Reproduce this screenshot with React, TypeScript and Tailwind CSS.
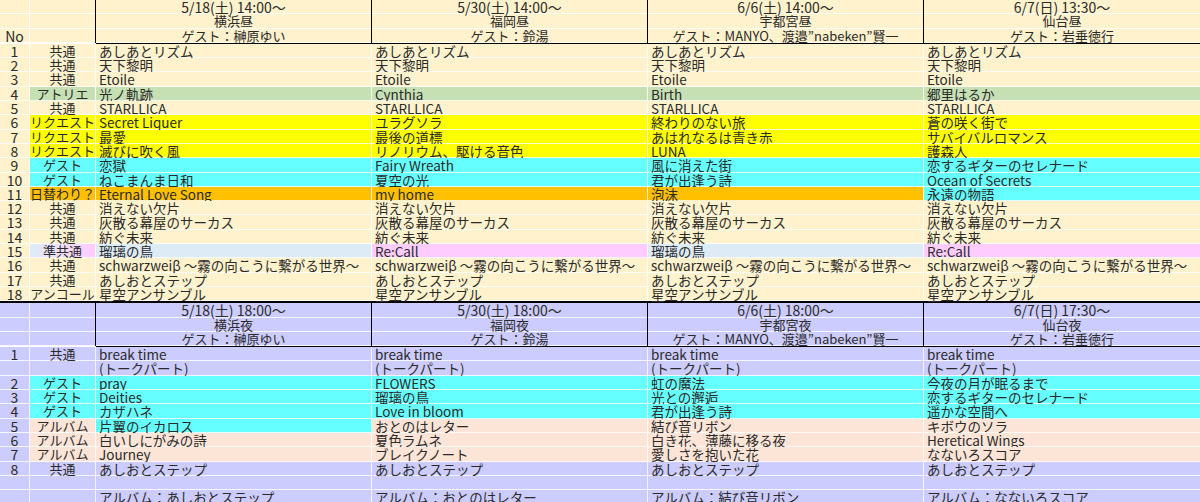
import React from "react";

const CREAM = "bg-[#fff2cc]";
const GREEN = "bg-[#c6e0b4]";
const YELLOW = "bg-[#ffff00]";
const CYAN = "bg-[#66ffff]";
const ORANGE = "bg-[#ffc000]";
const LAV = "bg-[#ccccff]";
const PEACH = "bg-[#fce4d6]";
const BLUE = "bg-[#ddebf7]";
const PINK = "bg-[#ffccff]";

type Row = { no: string; type: string; typeBg: string; noBg: string; songs: [string, string][] };

const r = (no: string, type: string, typeBg: string, noBg: string, songs: [string, string][]): Row => ({ no, type, typeBg, noBg, songs });
const same = (bg: string, a: string, b: string, c: string, d: string): [string, string][] => [
  [a, bg], [b, bg], [c, bg], [d, bg],
];

const dayRows: Row[] = [
  r("1", "共通", CREAM, CREAM, same(CREAM, "あしあとリズム", "あしあとリズム", "あしあとリズム", "あしあとリズム")),
  r("2", "共通", CREAM, CREAM, same(CREAM, "天下黎明", "天下黎明", "天下黎明", "天下黎明")),
  r("3", "共通", CREAM, CREAM, same(CREAM, "Etoile", "Etoile", "Etoile", "Etoile")),
  r("4", "アトリエ", GREEN, CREAM, same(GREEN, "光ノ軌跡", "Cynthia", "Birth", "郷里はるか")),
  r("5", "共通", CREAM, CREAM, same(CREAM, "STARLLICA", "STARLLICA", "STARLLICA", "STARLLICA")),
  r("6", "リクエスト", YELLOW, CREAM, same(YELLOW, "Secret Liquer", "ユラグソラ", "終わりのない旅", "蒼の咲く街で")),
  r("7", "リクエスト", YELLOW, CREAM, same(YELLOW, "最愛", "最後の道標", "あはれなるは青き赤", "サバイバルロマンス")),
  r("8", "リクエスト", YELLOW, CREAM, same(YELLOW, "滅びに吹く風", "リノリウム、駆ける音色", "LUNA", "護森人")),
  r("9", "ゲスト", CYAN, CREAM, same(CYAN, "恋獄", "Fairy Wreath", "風に消えた街", "恋するギターのセレナード")),
  r("10", "ゲスト", CYAN, CREAM, same(CYAN, "ねこまんま日和", "夏空の光", "君が出逢う詩", "Ocean of Secrets")),
  r("11", "日替わり？", ORANGE, CREAM, [["Eternal Love Song", ORANGE], ["my home", ORANGE], ["泡沫", ORANGE], ["永遠の物語", CYAN]]),
  r("12", "共通", CREAM, CREAM, same(CREAM, "消えない欠片", "消えない欠片", "消えない欠片", "消えない欠片")),
  r("13", "共通", CREAM, CREAM, same(CREAM, "灰散る幕屋のサーカス", "灰散る幕屋のサーカス", "灰散る幕屋のサーカス", "灰散る幕屋のサーカス")),
  r("14", "共通", CREAM, CREAM, same(CREAM, "紡ぐ未来", "紡ぐ未来", "紡ぐ未来", "紡ぐ未来")),
  r("15", "準共通", "bg-gradient-to-r from-[#ddebf7] to-[#ffccff]", CREAM, [["瑠璃の鳥", BLUE], ["Re:Call", PINK], ["瑠璃の鳥", BLUE], ["Re:Call", PINK]]),
  r("16", "共通", CREAM, CREAM, same(CREAM, "schwarzweiβ ～霧の向こうに繋がる世界～", "schwarzweiβ ～霧の向こうに繋がる世界～", "schwarzweiβ ～霧の向こうに繋がる世界～", "schwarzweiβ ～霧の向こうに繋がる世界～")),
  r("17", "共通", CREAM, CREAM, same(CREAM, "あしおとステップ", "あしおとステップ", "あしおとステップ", "あしおとステップ")),
  r("18", "アンコール", CREAM, CREAM, same(CREAM, "星空アンサンブル", "星空アンサンブル", "星空アンサンブル", "星空アンサンブル")),
];

const nightRows: Row[] = [
  r("1", "共通", LAV, LAV, same(LAV, "break time", "break time", "break time", "break time")),
  r("", "", LAV, LAV, same(LAV, "(トークパート)", "(トークパート)", "(トークパート)", "(トークパート)")),
  r("2", "ゲスト", CYAN, LAV, same(CYAN, "pray", "FLOWERS", "虹の魔法", "今夜の月が眠るまで")),
  r("3", "ゲスト", CYAN, LAV, same(CYAN, "Deities", "瑠璃の鳥", "光との邂逅", "恋するギターのセレナード")),
  r("4", "ゲスト", CYAN, LAV, same(CYAN, "カザハネ", "Love in bloom", "君が出逢う詩", "遥かな空間へ")),
  r("5", "アルバム", PEACH, LAV, [["片翼のイカロス", CYAN], ["おとのはレター", PEACH], ["結び音リボン", PEACH], ["キボウのソラ", PEACH]]),
  r("6", "アルバム", PEACH, LAV, same(PEACH, "白いしにがみの詩", "夏色ラムネ", "白き花、薄藤に移る夜", "Heretical Wings")),
  r("7", "アルバム", PEACH, LAV, same(PEACH, "Journey", "ブレイクノート", "愛しさを抱いた花", "なないろスコア")),
  r("8", "共通", LAV, LAV, same(LAV, "あしおとステップ", "あしおとステップ", "あしおとステップ", "あしおとステップ")),
  r("", "", LAV, LAV, same(LAV, "", "", "", "")),
  r("", "", LAV, LAV, same(LAV, "アルバム：あしおとステップ", "アルバム：おとのはレター", "アルバム：結び音リボン", "アルバム：なないろスコア")),
];

const dayHead = [
  ["5/18(土) 14:00～", "横浜昼", "ゲスト：榊原ゆい"],
  ["5/30(土) 14:00～", "福岡昼", "ゲスト：鈴湯"],
  ["6/6(土) 14:00～", "宇都宮昼", "ゲスト：MANYO、渡邉”nabeken”賢一"],
  ["6/7(日) 13:30～", "仙台昼", "ゲスト：岩垂徳行"],
];
const nightHead = [
  ["5/18(土) 18:00～", "横浜夜", "ゲスト：榊原ゆい"],
  ["5/30(土) 18:00～", "福岡夜", "ゲスト：鈴湯"],
  ["6/6(土) 18:00～", "宇都宮夜", "ゲスト：MANYO、渡邉”nabeken”賢一"],
  ["6/7(日) 17:30～", "仙台夜", "ゲスト：岩垂徳行"],
];

// rows are fixed-height; text sits centred and may touch the row edges like a spreadsheet
const cell = "h-[14.3px] leading-[14.3px] whitespace-nowrap border-b border-white/80";

function Header({ head, bg, showNo }: { head: string[][]; bg: string; showNo: boolean }) {
  return (
    <div className="flex">
      <div className={`w-[30px] ${bg} border-r border-white/80`}>
        <div className={cell} />
        <div className={cell} />
        <div className={`${cell} text-center text-[14px]`}>{showNo ? "No" : ""}</div>
      </div>
      <div className={`w-[66px] ${bg} border-r border-black`}>
        <div className={cell} />
        <div className={cell} />
        <div className={cell} />
      </div>
      {head.map((h, i) => (
        <div key={i} className={`w-[276px] ${bg} text-center border-r border-black last:border-r-0`}>
          <div className={`${cell} text-[14px]`}>{h[0]}</div>
          <div className={cell}>{h[1]}</div>
          <div className={cell}>{h[2]}</div>
        </div>
      ))}
    </div>
  );
}

function Body({ rows }: { rows: Row[] }) {
  return (
    <div>
      {rows.map((row, i) => (
        <div key={i} className="flex">
          <div className={`${cell} w-[30px] ${row.noBg} text-center text-[14px] border-r border-white/80`}>{row.no}</div>
          <div className={`${cell} w-[66px] ${row.typeBg} text-center border-r border-black`}>{row.type}</div>
          {row.songs.map(([s, bg], j) => (
            <div key={j} className={`${cell} w-[276px] ${bg} pl-[3px] text-[13.5px] border-r border-black last:border-r-0`}>{s}</div>
          ))}
        </div>
      ))}
    </div>
  );
}

export default function App() {
  return (
    <div
      className="w-[1200px] h-[502px] overflow-hidden bg-white text-[13px] text-[#2a2a2a]"
      style={{ fontFamily: '"Noto Sans CJK JP", "Noto Sans", sans-serif' }}
    >
      <Header head={dayHead} bg={CREAM} showNo />
      <div className="ml-[96px] h-px bg-black" />
      <Body rows={dayRows} />
      <div className="h-[2px] bg-black" />
      <Header head={nightHead} bg={LAV} showNo={false} />
      <div className="ml-[96px] h-px bg-black" />
      <Body rows={nightRows} />
    </div>
  );
}
